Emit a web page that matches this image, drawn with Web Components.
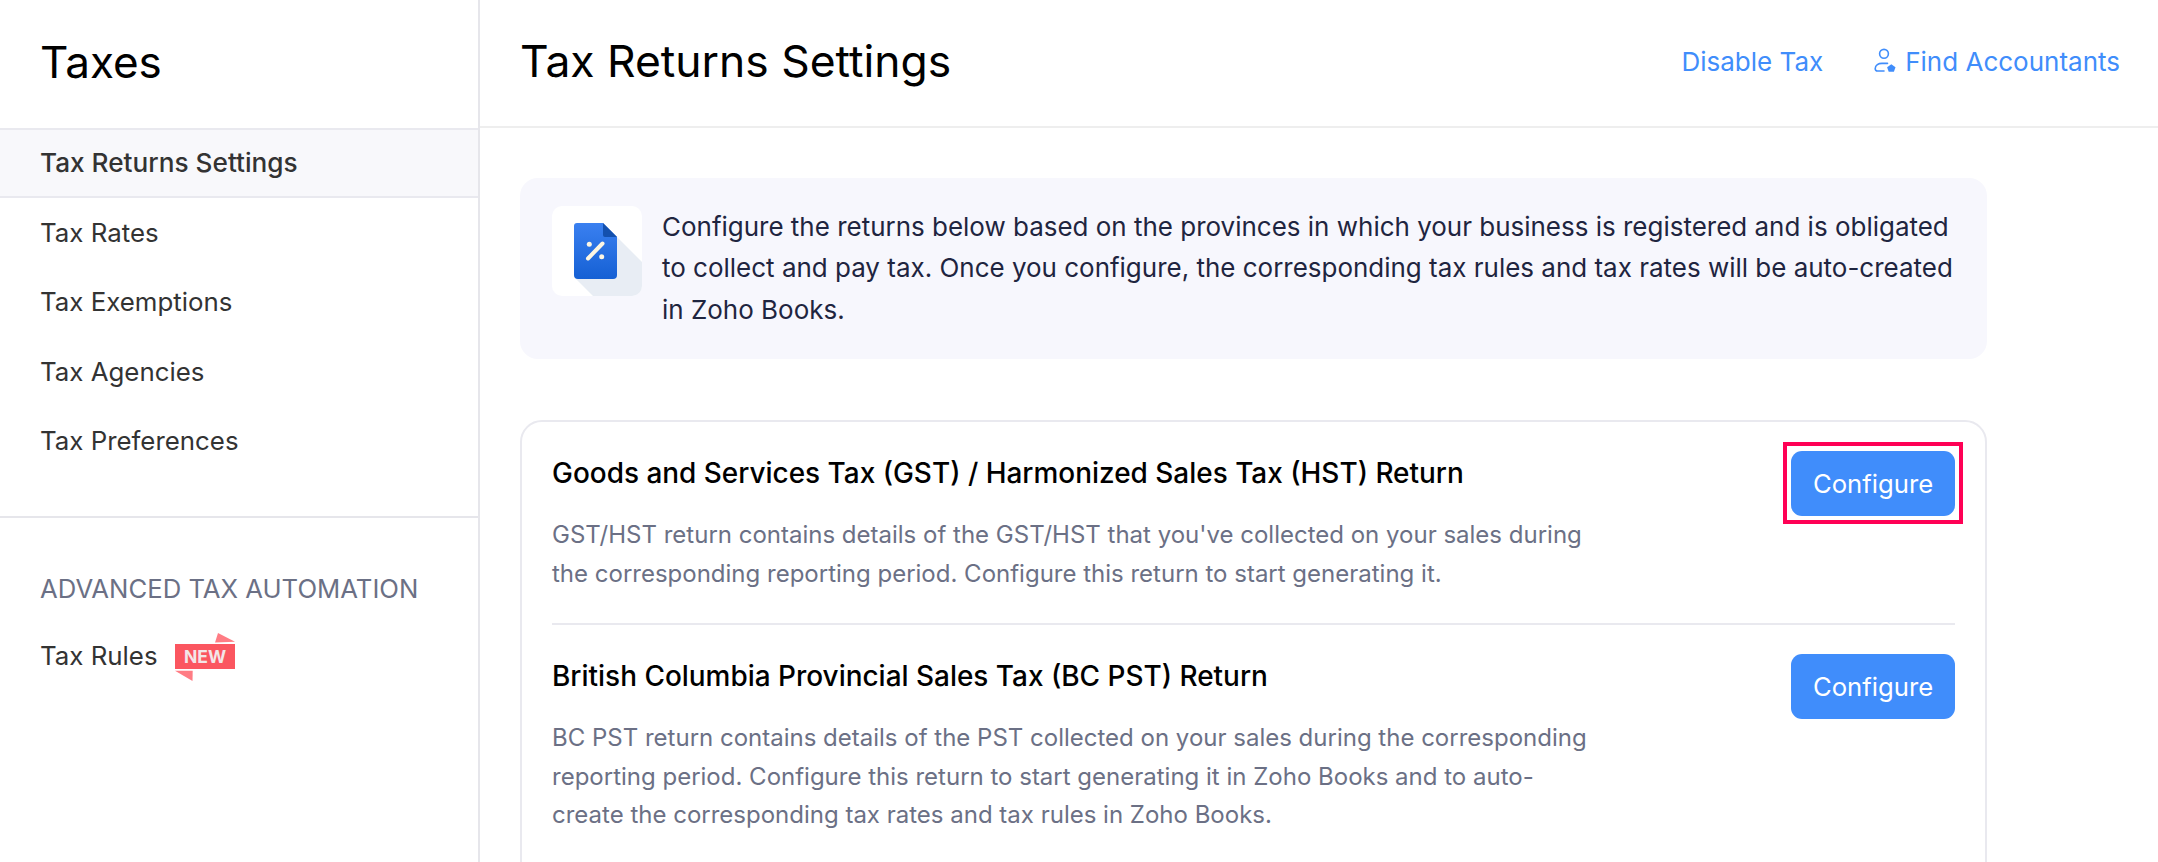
<!DOCTYPE html>
<html lang="en">
<head>
  <meta charset="UTF-8">
  <title>Taxes</title>
  <style>
    html, body { margin: 0; height: 100%; background: #fff; overflow: hidden; }
    body { font-family: Inter, "Liberation Sans", sans-serif; }
  </style>
</head>
<body>
  <tax-app>
    <tax-sidebar slot="side">
      <nav-item active>Tax Returns Settings</nav-item>
      <nav-item>Tax Rates</nav-item>
      <nav-item>Tax Exemptions</nav-item>
      <nav-item>Tax Agencies</nav-item>
      <nav-item>Tax Preferences</nav-item>
      <nav-item slot="advanced">Tax Rules<new-ribbon></new-ribbon></nav-item>
    </tax-sidebar>
    <tax-header slot="head">Tax Returns Settings</tax-header>
    <info-banner>Configure the returns below based on the provinces in which your business is registered and is obligated to collect and pay tax. Once you configure, the corresponding tax rules and tax rates will be auto-created in Zoho Books.</info-banner>
    <return-card>
      <return-row heading="Goods and Services Tax (GST) / Harmonized Sales Tax (HST) Return" marked>GST/HST return contains details of the GST/HST that you've collected on your sales during the corresponding reporting period. Configure this return to start generating it.</return-row>
      <return-row heading="British Columbia Provincial Sales Tax (BC PST) Return">BC PST return contains details of the PST collected on your sales during the corresponding reporting period. Configure this return to start generating it in Zoho Books and to auto-create the corresponding tax rates and tax rules in Zoho Books.</return-row>
    </return-card>
  </tax-app>

  <script>
    class TaxApp extends HTMLElement {
      constructor() {
        super()
        this.attachShadow({ mode: 'open' })
      }

      connectedCallback() {
        this.shadowRoot.innerHTML = `
          <style>
            :host { display: grid; grid-template-columns: 480px 1fr; grid-template-rows: 128px 1fr; height: 862px; overflow: hidden; }
            .side { grid-row: 1 / 3; display: flex; min-height: 0; }
            .body { padding: 50px 171px 0 40px; min-width: 0; }
          </style>
          <div class="side"><slot name="side"></slot></div>
          <slot name="head"></slot>
          <div class="body"><slot></slot></div>
        `
      }
    }

    class TaxSidebar extends HTMLElement {
      constructor() {
        super()
        this.attachShadow({ mode: 'open' })
      }

      connectedCallback() {
        this.shadowRoot.innerHTML = `
          <style>
            :host { display: block; flex: 1; box-sizing: border-box; border-right: 2.5px solid #e6e6eb; }
            h1 { margin: 0; height: 128px; box-sizing: border-box; padding: 0 0 5px 40px; display: flex; align-items: center; font-size: 44px; font-weight: 400; color: #000; }
            .adv { margin-top: 40px; border-top: 2.5px solid #e6e6eb; padding-top: 51px; }
            .label { padding: 0 0 12px 40px; font-size: 25.7px; line-height: 40px; color: #6b7085; }
          </style>
          <h1>Taxes</h1>
          <slot></slot>
          <div class="adv">
            <div class="label">ADVANCED TAX AUTOMATION</div>
            <slot name="advanced"></slot>
          </div>
        `
      }
    }

    class NavItem extends HTMLElement {
      constructor() {
        super()
        this.attachShadow({ mode: 'open' })
      }

      connectedCallback() {
        this.shadowRoot.innerHTML = `
          <style>
            :host { display: flex; align-items: center; box-sizing: border-box; height: 69.5px; padding-left: 40px; font-size: 25.85px; color: #333; }
            :host([active]) { background: #f8f8fb; border-top: 2.5px solid #e9e9ef; border-bottom: 2.5px solid #e9e9ef; font-size: 26.2px; font-weight: 500; }
          </style>
          <slot></slot>
        `
      }
    }

    class NewRibbon extends HTMLElement {
      constructor() {
        super()
        this.attachShadow({ mode: 'open' })
      }

      connectedCallback() {
        this.shadowRoot.innerHTML = `
          <style>
            :host { display: inline-block; width: 60px; height: 48px; margin: 3px 0 0 17px; }
            svg { display: block; }
            text { font: 700 17.5px Inter, sans-serif; fill: #f3e6e8; }
          </style>
          <svg width="60" height="48" viewBox="0 0 60 48">
            <path d="M40 9.5 43 0 60 8.7Z" fill="#ff7c84"/>
            <path d="M0 37.7H17.7L17.5 48Z" fill="#ff7c84"/>
            <rect width="60" height="25" y="11" fill="#fb5660"/>
            <text x="30" y="30" text-anchor="middle">NEW</text>
          </svg>
        `
      }
    }

    class TaxHeader extends HTMLElement {
      constructor() {
        super()
        this.attachShadow({ mode: 'open' })
      }

      connectedCallback() {
        this.shadowRoot.innerHTML = `
          <style>
            :host { display: flex; align-items: center; box-sizing: border-box; height: 128px; padding: 0 38px 0 40px; border-bottom: 2px solid #eee; }
            h2 { margin: 0 0 4px; flex: 1; font-size: 44.4px; font-weight: 400; color: #000; }
            a { display: flex; align-items: center; gap: 9px; margin-bottom: 3px; font-size: 26px; color: #408dfb; text-decoration: none; }
            a + a { margin-left: 51px; }
            svg { display: block; margin-bottom: 3px; }
          </style>
          <h2><slot></slot></h2>
          <a href="#">Disable Tax</a>
          <a href="#">
            <svg width="22" height="24" viewBox="0 0 22 24" fill="none" stroke="#408dfb" stroke-width="1.6">
              <circle cx="10" cy="5.8" r="4.4"/>
              <path d="M10 23H3.4A2.2 2.2 0 0 1 1.2 20.8C1.2 17 4.6 15.4 8 15.4H13.5" stroke-linecap="round"/>
              <path d="M17.3 16.2 21.5 19.2 19.9 23.8H14.7L13.1 19.2Z" fill="#408dfb" stroke="none"/>
            </svg>
            Find Accountants
          </a>
        `
      }
    }

    class InfoBanner extends HTMLElement {
      constructor() {
        super()
        this.attachShadow({ mode: 'open' })
      }

      connectedCallback() {
        this.shadowRoot.innerHTML = `
          <style>
            :host { display: flex; gap: 20px; box-sizing: border-box; height: 181px; padding: 28px 32px; background: #f7f7fd; border-radius: 18px; font-size: 25.98px; line-height: 41.3px; color: #1f2540; }
            .pic { flex: none; width: 90px; height: 90px; border-radius: 10px; background: #fff; overflow: hidden; }
            svg { display: block; }
            p { margin: 0; }
          </style>
          <div class="pic">
            <svg width="90" height="90" viewBox="0 0 90 90">
              <defs>
                <linearGradient id="doc" x1="0" y1="0" x2="0" y2="1">
                  <stop offset="0" stop-color="#3a80f0"/>
                  <stop offset="1" stop-color="#1560d4"/>
                </linearGradient>
              </defs>
              <path d="M65 31 90 56V90H41L23 72Z" fill="#e8edf4"/>
              <path d="M25 17H51L65 31V69A4 4 0 0 1 61 73H26A4 4 0 0 1 22 69V20A3 3 0 0 1 25 17Z" fill="url(#doc)"/>
              <path d="M51 17 65 31H53A2 2 0 0 1 51 29Z" fill="#1450ad"/>
              <path d="M36 52.5 50.5 37.5" stroke="#fdf6e3" stroke-width="4" stroke-linecap="round"/>
              <circle cx="37.3" cy="38.3" r="2.5" fill="#fdf6e3"/>
              <circle cx="49.7" cy="50.7" r="2.5" fill="#fdf6e3"/>
            </svg>
          </div>
          <p><slot></slot></p>
        `
      }
    }

    class ReturnCard extends HTMLElement {
      constructor() {
        super()
        this.attachShadow({ mode: 'open' })
      }

      connectedCallback() {
        this.shadowRoot.innerHTML = `
          <style>
            :host { display: block; box-sizing: border-box; margin-top: 61px; height: 600px; padding: 0 30px; border: 2px solid #e9e9ef; border-radius: 22px; }
          </style>
          <slot></slot>
        `
      }
    }

    class ReturnRow extends HTMLElement {
      constructor() {
        super()
        this.attachShadow({ mode: 'open' })
      }

      connectedCallback() {
        const marked = this.hasAttribute('marked')
        this.shadowRoot.innerHTML = `
          <style>
            :host { display: flex; justify-content: space-between; align-items: flex-start; box-sizing: border-box; padding: 29px 0 30px; border-bottom: 2px solid #e9e9ef; }
            :host(:last-child) { border-bottom: 0; }
            h3 { margin: 0; font-size: 27.95px; line-height: 44px; font-weight: 500; color: #000; }
            p { margin: 21px 0 0; width: 1045px; font-size: 24px; line-height: 38.5px; color: #6b7085; }
          </style>
          <div>
            <h3>${this.getAttribute('heading')}</h3>
            <p><slot></slot></p>
          </div>
          <config-button ${marked ? 'marked' : ''}>Configure</config-button>
        `
      }
    }

    class ConfigButton extends HTMLElement {
      constructor() {
        super()
        this.attachShadow({ mode: 'open' })
      }

      connectedCallback() {
        this.shadowRoot.innerHTML = `
          <style>
            :host { display: flex; flex: none; position: relative; align-items: center; justify-content: center; box-sizing: border-box; width: 164px; height: 65px; background: #408dfb; border-radius: 11px; color: #fff; font-size: 25.7px; }
            :host([marked])::after { content: ""; position: absolute; inset: -9px -8px -8px; border: 4px solid #ff0055; }
          </style>
          <slot></slot>
        `
      }
    }

    customElements.define('tax-app', TaxApp)
    customElements.define('tax-sidebar', TaxSidebar)
    customElements.define('nav-item', NavItem)
    customElements.define('new-ribbon', NewRibbon)
    customElements.define('tax-header', TaxHeader)
    customElements.define('info-banner', InfoBanner)
    customElements.define('return-card', ReturnCard)
    customElements.define('return-row', ReturnRow)
    customElements.define('config-button', ConfigButton)
  </script>
</body>
</html>
